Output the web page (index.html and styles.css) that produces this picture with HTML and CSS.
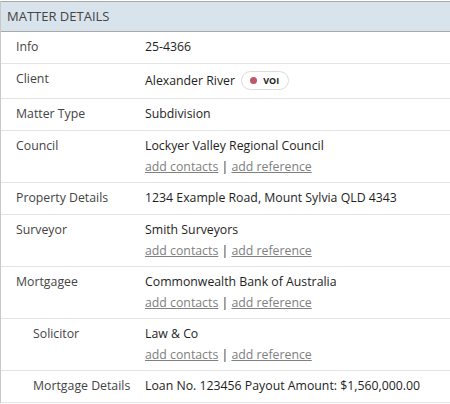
FILE: index.html
```html
<!DOCTYPE html>
<html lang="en">
  <head>
    <meta charset="UTF-8" />
    <meta name="viewport" content="width=device-width, initial-scale=1" />
    <title>Matter Details</title>
    <link rel="stylesheet" href="styles.css">
  </head>
  <body>
    <div class="panel">
      <div class="panel-header">Matter Details</div>
      <table class="details">
        <tr>
          <td class="label">Info</td>
          <td class="value">25-4366</td>
        </tr>
        <tr>
          <td class="label">Client</td>
          <td class="value">
            Alexander River
            <span class="badge"><span class="dot"></span>VOI</span>
          </td>
        </tr>
        <tr>
          <td class="label">Matter Type</td>
          <td class="value">Subdivision</td>
        </tr>
        <tr class="has-links">
          <td class="label">Council</td>
          <td class="value">
            <div>Lockyer Valley Regional Council</div>
            <div class="links"><a href="#">add contacts</a> | <a href="#">add reference</a></div>
          </td>
        </tr>
        <tr>
          <td class="label">Property Details</td>
          <td class="value">1234 Example Road, Mount Sylvia QLD 4343</td>
        </tr>
        <tr class="has-links">
          <td class="label">Surveyor</td>
          <td class="value">
            <div>Smith Surveyors</div>
            <div class="links"><a href="#">add contacts</a> | <a href="#">add reference</a></div>
          </td>
        </tr>
        <tr class="has-links">
          <td class="label">Mortgagee</td>
          <td class="value">
            <div>Commonwealth Bank of Australia</div>
            <div class="links"><a href="#">add contacts</a> | <a href="#">add reference</a></div>
          </td>
        </tr>
        <tr class="has-links">
          <td class="label sub">Solicitor</td>
          <td class="value">
            <div>Law &amp; Co</div>
            <div class="links"><a href="#">add contacts</a> | <a href="#">add reference</a></div>
          </td>
        </tr>
        <tr>
          <td class="label sub">Mortgage Details</td>
          <td class="value">Loan No. 123456 Payout Amount: $1,560,000.00</td>
        </tr>
      </table>
    </div>
  </body>
</html>
```

FILE: styles.css
```css
html,
body {
  margin: 0;
  padding: 0;
  background: white;
  font-family: "Open Sans", "Noto Sans", Arial, sans-serif;
  font-size: 12.3px;
  color: #1e1e1e;
}
.panel {
  border-left: 1px solid #c8c8c8;
  margin-top: 1px;
}
.panel-header {
  background: #d9e3ec;
  border-top: 1px solid #a9a9a9;
  border-bottom: 1px solid #a9a9a9;
  height: 29px;
  line-height: 29px;
  padding-left: 6px;
  text-transform: uppercase;
  font-size: 13px;
  color: #444;
}
.details {
  width: 100%;
  border-collapse: collapse;
}
.details td {
  border-bottom: 1px solid #e4e4e4;
  padding: 7px 0 8px;
  vertical-align: top;
  line-height: 16px;
}
.details .has-links td {
  padding-bottom: 7px;
}
.label {
  width: 129px;
  padding-left: 15px !important;
  color: #444;
}
.label.sub {
  padding-left: 32px !important;
  width: 112px;
}
.value {
  padding-right: 8px !important;
}
.links {
  margin-top: 5px;
  color: #333;
}
.links a {
  color: #808080;
}
.badge {
  display: inline-flex;
  align-items: center;
  gap: 6px;
  margin-left: 3px;
  padding: 2px 9px 2px 8px;
  border: 1px solid #dcdcdc;
  border-radius: 10px;
  font-size: 9px;
  font-weight: bold;
  color: #222;
  line-height: 13px;
  vertical-align: 1px;
}
.dot {
  width: 7px;
  height: 7px;
  border-radius: 50%;
  background: #c0566c;
}
```
